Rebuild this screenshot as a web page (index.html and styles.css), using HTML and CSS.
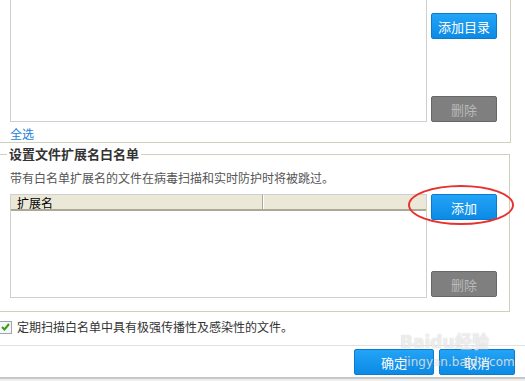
FILE: index.html
```html
<!DOCTYPE html>
<html lang="zh-CN">
<head>
  <meta charset="UTF-8" />
  <title>白名单设置</title>
  <link rel="stylesheet" href="styles.css">
</head>
<body>
  <div class="page">
    <div class="group-top">
      <div class="list-row">
        <div class="list-box"></div>
        <div class="btn-col">
          <button class="btn blue">添加目录</button>
          <button class="btn gray">删除</button>
        </div>
      </div>
      <a class="select-all">全选</a>
    </div>

    <fieldset class="ext-group">
      <legend>设置文件扩展名白名单</legend>
      <div class="desc">带有白名单扩展名的文件在病毒扫描和实时防护时将被跳过。</div>
      <div class="list-row">
        <div class="ext-table">
          <div class="thead">
            <div class="th first">扩展名</div>
            <div class="th"></div>
          </div>
        </div>
        <div class="btn-col tall">
          <button class="btn blue">添加</button>
          <button class="btn gray">删除</button>
        </div>
      </div>
    </fieldset>

    <label class="check-row">
      <span class="checkbox">
        <svg width="9" height="8" viewBox="0 0 9 8"><path d="M1 4 L3.5 6.5 L8 1" fill="none" stroke="#3a9a1a" stroke-width="2"/></svg>
      </span>
      定期扫描白名单中具有极强传播性及感染性的文件。
    </label>

    <div class="footer">
      <button class="btn blue ok">确定</button>
      <button class="btn blue cancel">取消</button>
    </div>
    <div class="bottom-strip"><span class="strip-link">帮助</span></div>

    <div class="mark-circle"></div>
    <div class="watermark">
      <div class="wm-logo">Baidu经验</div>
      <div class="wm-url">jingyan.baidu.com</div>
    </div>
  </div>
</body>
</html>
```

FILE: styles.css
```css
body { margin: 0; font-family: "Noto Sans CJK SC", "DejaVu Sans", sans-serif; font-size: 12px; color: #333; background: #fff; }
.page { position: relative; width: 525px; height: 381px; overflow: hidden; }

.group-top { width: 510px; height: 142px; border-right: 1px solid #d0d0bf; border-bottom: 1px solid #d0d0bf; box-sizing: content-box; }
.list-row { display: flex; padding-left: 10px; gap: 4px; }
.list-box { width: 415px; height: 121px; border: 1px solid #cfcfcf; border-top: none; background: #fff; }
.btn-col { display: flex; flex-direction: column; justify-content: space-between; width: 66px; padding-top: 13px; height: 109px; }
.select-all { display: block; margin: 4px 0 0 10px; line-height: 16px; color: #1a7fd8; cursor: pointer; }

.btn { box-sizing: border-box; height: 26px; width: 66px; border-radius: 2px; font-family: inherit; font-size: 13px; padding: 0; cursor: pointer; }
.btn.blue { background: linear-gradient(#22a4f7, #0c8ae5); border: 1px solid #0a7bd0; color: #fff; }
.btn.gray { background: #7f7f7f; border: 1px solid #676767; color: #b9b9b9; }

.ext-group { margin: 3px 0 0 -1px; width: 511px; padding: 0 0 13px 1px; border: 1px solid #d0d0bf; box-sizing: border-box; min-width: 0; }
.ext-group legend { margin-left: 6px; padding: 0 2px; font-weight: bold; font-size: 13px; line-height: 16px; color: #333; }
.desc { margin: 8px 0 8px 9px; line-height: 16px; color: #555; }
.ext-group .list-row { padding-left: 9px; }
.ext-table { width: 415px; height: 102px; border: 1px solid #cfcfcf; background: #fff; }
.thead { display: flex; height: 14px; background: #ebe8d8; border-bottom: 2px solid #aca899; }
.th { flex: 1; line-height: 15px; padding-left: 6px; color: #000; }
.th.first { flex: 0 0 245px; border-right: 1px solid #aca899; box-shadow: 1px 0 0 #fff; }
.btn-col.tall { padding-top: 0; height: 103px; }

.check-row { display: flex; align-items: center; gap: 5px; margin-top: 7px; line-height: 16px; }
.checkbox { display: flex; align-items: center; justify-content: center; width: 11px; height: 11px; border: 1px solid #9aa7b3; background: #f4f6f8; margin-left: -1px; }

.footer { display: flex; justify-content: flex-end; gap: 5px; margin-top: 10px; padding: 3px 10px 2px 0; border-top: 1px solid #e2e2e2; }
.footer .ok { width: 80px; }
.footer .cancel { width: 76px; }
.bottom-strip { height: 6px; border-top: 2px solid #c8c8c8; background: #eee; }
.strip-link { display: inline-block; margin-left: 80px; color: #1a7fd8; font-size: 12px; line-height: 6px; }

.mark-circle { position: absolute; left: 408px; top: 185px; width: 102px; height: 36px; border: 2px solid #e8322f; border-radius: 50%; }
.watermark { position: absolute; left: 400px; top: 333px; color: rgba(255,255,255,0.7); text-shadow: 0 0 1px rgba(120,120,120,0.45); }
.wm-logo { font-family: "DejaVu Sans", sans-serif; font-weight: bold; font-size: 17px; line-height: 18px; }
.wm-url { font-family: "DejaVu Sans", sans-serif; font-size: 12px; margin: 4px 0 0 4px; }
```
